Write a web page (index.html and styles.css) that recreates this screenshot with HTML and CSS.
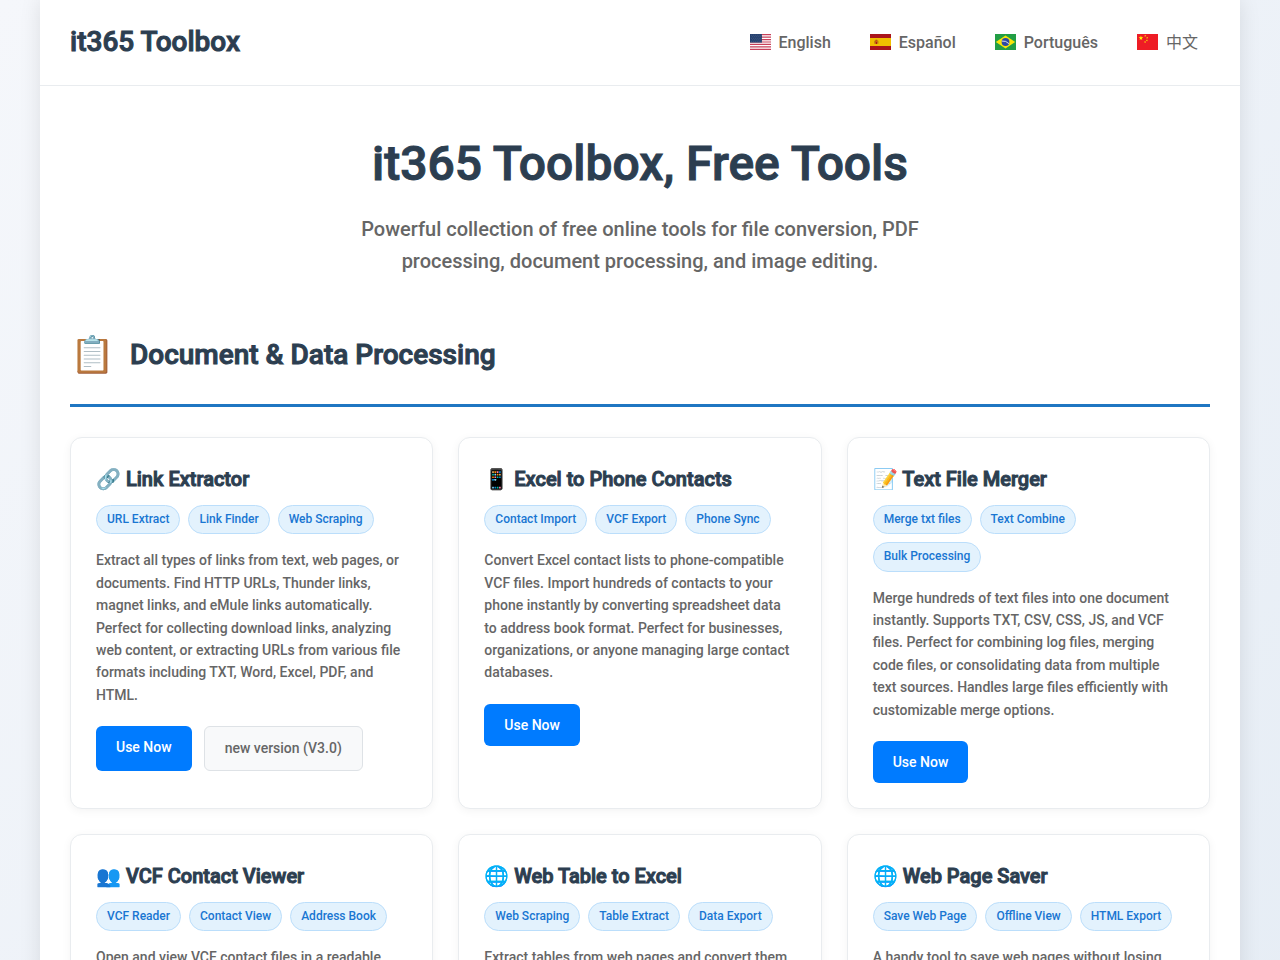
FILE: index.html
```html
<!DOCTYPE html>
<html lang="en">
<head>
    <meta charset="UTF-8">
    <meta name="viewport" content="width=device-width, initial-scale=1.0">
    <title>it365 Toolbox, Free Tools</title>
    <link rel="stylesheet" href="styles.css">
</head>
<body>
    <div class="container">
        <header class="header">
            <a class="logo" href="#">it365 Toolbox</a>
            <nav class="lang-nav">
                <a href="#en">
                    <svg class="flag" viewBox="0 0 640 480" preserveAspectRatio="none">
                        <path fill="#fff" d="M0 0h640v480H0z"/>
                        <path stroke="#c8405a" stroke-width="37" d="M0 18h640M0 92h640M0 166h640M0 240h640M0 314h640M0 388h640M0 462h640"/>
                        <path fill="#24406e" d="M0 0h364v258H0z"/>
                        <path stroke="#a9b6cc" stroke-width="14" stroke-dasharray="14 46" d="M30 36h320M60 82h290M30 128h320M60 174h290M30 220h320"/>
                    </svg>
                    English
                </a>
                <a href="#es">
                    <svg class="flag" viewBox="0 0 640 480" preserveAspectRatio="none">
                        <path fill="#aa151b" d="M0 0h640v480H0z"/>
                        <path fill="#f1bf00" d="M0 120h640v240H0z"/>
                        <path fill="#ad1519" d="M165 190h60v92q-30 30-60 0z"/>
                        <path fill="#8a5a20" d="M138 200h16v90h-16zM236 200h16v90h-16zM170 170h50v18h-50z"/>
                        <path fill="#f1bf00" d="M195 205h20v26h-20z"/>
                    </svg>
                    Español
                </a>
                <a href="#pt">
                    <svg class="flag" viewBox="0 0 640 480" preserveAspectRatio="none">
                        <path fill="#229e45" d="M0 0h640v480H0z"/>
                        <path fill="#f8e509" d="M320 436 26 240 320 44l294 196z"/>
                        <circle cx="320" cy="240" r="118" fill="#2b49a3"/>
                        <path fill="none" stroke="#fff" stroke-width="24" d="M208 212q125-18 218 78"/>
                    </svg>
                    Português
                </a>
                <a href="#zh" lang="zh">
                    <svg class="flag" viewBox="0 0 640 480" preserveAspectRatio="none">
                        <path fill="#ee1c25" d="M0 0h640v480H0z"/>
                        <path fill="#ff0" d="m120 48 17 52h54l-44 32 17 52-44-32-44 32 17-52-44-32h54z"/>
                        <path fill="#ff0" d="M225 36l22 6 14-16v22l20 8-20 8v22l-14-18-22 6 12-18zM282 96l22 6 14-16v22l20 8-20 8v22l-14-18-22 6 12-18zM276 172l22 6 14-16v22l20 8-20 8v22l-14-18-22 6 12-18zM220 220l22 6 14-16v22l20 8-20 8v22l-14-18-22 6 12-18z"/>
                    </svg>
                    中文
                </a>
            </nav>
        </header>

        <main class="main">
            <div class="hero">
                <h1>it365 Toolbox, Free Tools</h1>
                <p>Powerful collection of free online tools for file conversion, PDF processing, document processing, and image editing.</p>
            </div>

            <section>
                <div class="category-header">
                    <span class="category-icon">📋</span>
                    <h2>Document &amp; Data Processing</h2>
                </div>

                <div class="tools-grid">
                    <div class="tool-card">
                        <h3>🔗 Link Extractor</h3>
                        <div class="tags">
                            <span class="tag">URL Extract</span>
                            <span class="tag">Link Finder</span>
                            <span class="tag">Web Scraping</span>
                        </div>
                        <p>Extract all types of links from text, web pages, or documents. Find HTTP URLs, Thunder links, magnet links, and eMule links automatically. Perfect for collecting download links, analyzing web content, or extracting URLs from various file formats including TXT, Word, Excel, PDF, and HTML.</p>
                        <div class="actions">
                            <a class="btn" href="#">Use Now</a>
                            <a class="btn btn-secondary" href="#">new version (V3.0)</a>
                        </div>
                    </div>

                    <div class="tool-card">
                        <h3>📱 Excel to Phone Contacts</h3>
                        <div class="tags">
                            <span class="tag">Contact Import</span>
                            <span class="tag">VCF Export</span>
                            <span class="tag">Phone Sync</span>
                        </div>
                        <p>Convert Excel contact lists to phone-compatible VCF files. Import hundreds of contacts to your phone instantly by converting spreadsheet data to address book format. Perfect for businesses, organizations, or anyone managing large contact databases.</p>
                        <div class="actions">
                            <a class="btn" href="#">Use Now</a>
                        </div>
                    </div>

                    <div class="tool-card">
                        <h3>📝 Text File Merger</h3>
                        <div class="tags">
                            <span class="tag">Merge txt files</span>
                            <span class="tag">Text Combine</span>
                            <span class="tag">Bulk Processing</span>
                        </div>
                        <p>Merge hundreds of text files into one document instantly. Supports TXT, CSV, CSS, JS, and VCF files. Perfect for combining log files, merging code files, or consolidating data from multiple text sources. Handles large files efficiently with customizable merge options.</p>
                        <div class="actions">
                            <a class="btn" href="#">Use Now</a>
                        </div>
                    </div>

                    <div class="tool-card">
                        <h3>👥 VCF Contact Viewer</h3>
                        <div class="tags">
                            <span class="tag">VCF Reader</span>
                            <span class="tag">Contact View</span>
                            <span class="tag">Address Book</span>
                        </div>
                        <p>Open and view VCF contact files in a readable</p>
                    </div>

                    <div class="tool-card">
                        <h3>🌐 Web Table to Excel</h3>
                        <div class="tags">
                            <span class="tag">Web Scraping</span>
                            <span class="tag">Table Extract</span>
                            <span class="tag">Data Export</span>
                        </div>
                        <p>Extract tables from web pages and convert them</p>
                    </div>

                    <div class="tool-card">
                        <h3>🌐 Web Page Saver</h3>
                        <div class="tags">
                            <span class="tag">Save Web Page</span>
                            <span class="tag">Offline View</span>
                            <span class="tag">HTML Export</span>
                        </div>
                        <p>A handy tool to save web pages without losing</p>
                    </div>
                </div>
            </section>
        </main>
    </div>
</body>
</html>
```

FILE: styles.css
```css
* {
    margin: 0;
    padding: 0;
    box-sizing: border-box;
}
body {
    font-family: Roboto, "Noto Sans CJK SC", sans-serif;
    font-weight: 500;
    line-height: 1.6;
    color: #333;
    background: linear-gradient(135deg, #f5f7fb 0%, #e6edf5 100%);
    min-height: 100vh;
}
a {
    text-decoration: none;
}
h1, h2, h3, .logo {
    font-weight: 500;
    color: #2c3e50;
    -webkit-text-stroke: 1px #2c3e50;
}
.container {
    max-width: 1200px;
    margin: 0 auto;
    background: #fff;
    box-shadow: 0 0 20px rgba(0, 0, 0, 0.1);
}
.header {
    display: flex;
    justify-content: space-between;
    align-items: center;
    padding: 20px 30px;
    border-bottom: 1px solid #e9ecef;
}
.logo {
    font-size: 28px;
}
.lang-nav {
    display: flex;
    gap: 15px;
}
.lang-nav a {
    display: flex;
    align-items: center;
    gap: 8px;
    padding: 8px 12px;
    font-size: 16px;
    color: #666;
}
.lang-nav a:lang(zh) {
    font-weight: 400;
}
.flag {
    width: 21px;
    height: 16px;
}
.main {
    padding: 40px 30px;
}
.hero {
    text-align: center;
    margin-bottom: 50px;
}
.hero h1 {
    font-size: 48px;
    margin-bottom: 10px;
}
.hero p {
    max-width: 600px;
    margin: 0 auto;
    font-size: 20px;
    color: #666;
}
.category-header {
    display: flex;
    align-items: center;
    gap: 15px;
    padding-bottom: 20px;
    margin-bottom: 30px;
    border-bottom: 3px solid #1f76c2;
}
.category-icon {
    font-size: 36px;
}
.category-header h2 {
    font-size: 28px;
}
.tools-grid {
    display: grid;
    grid-template-columns: repeat(3, 1fr);
    gap: 25px;
}
.tool-card {
    background: #fff;
    border: 1px solid #e9ecef;
    border-radius: 12px;
    padding: 25px;
    box-shadow: 0 2px 10px rgba(0, 0, 0, 0.05);
}
.tool-card h3 {
    font-size: 20px;
    margin-bottom: 10px;
}
.tags {
    display: flex;
    flex-wrap: wrap;
    gap: 8px;
    margin-bottom: 15px;
}
.tag {
    padding: 4px 10px;
    font-size: 12px;
    color: #1976d2;
    background: #e3f2fd;
    border: 1px solid #bbdefb;
    border-radius: 15px;
}
.tool-card p {
    font-size: 14px;
    color: #666;
    margin-bottom: 20px;
}
.actions {
    display: flex;
    gap: 12px;
}
.btn {
    padding: 10px 20px;
    font-size: 14px;
    color: #fff;
    background: #007bff;
    border-radius: 6px;
}
.btn-secondary {
    color: #666;
    background: #f8f9fa;
    border: 1px solid #dee2e6;
}
```
